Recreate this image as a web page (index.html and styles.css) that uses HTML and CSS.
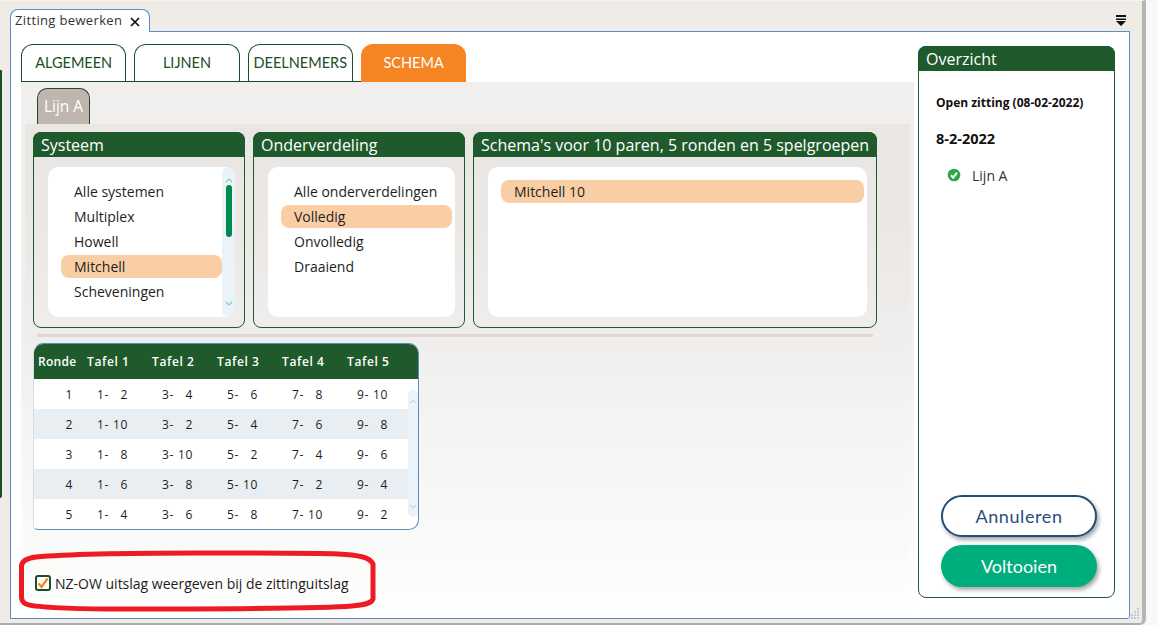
FILE: index.html
```html
<!DOCTYPE html>
<html lang="nl">
<head>
<meta charset="utf-8">
<title>Zitting bewerken</title>
<link rel="stylesheet" href="styles.css">
</head>
<body>
<div class="desk">
  <div class="window">
    <div class="left-sliver"></div>
    <div class="dockbar">
      <div class="docktab">
        <span>Zitting bewerken</span>
        <svg class="close" width="10" height="10" viewBox="0 0 10 10"><path d="M1 1 9 9M9 1 1 9" stroke="#111" stroke-width="1.7" fill="none"/></svg>
      </div>
      <svg class="menu" width="10" height="11" viewBox="0 0 10 11"><path d="M0 0h10v2H0zM0 3.5h10v1.5H0zM0 6h10L5 11z" fill="#111"/></svg>
    </div>
    <div class="panel">
      <div class="main">
        <div class="tabs">
          <div class="tabs-plain">
            <div class="tab">ALGEMEEN</div>
            <div class="tab">LIJNEN</div>
            <div class="tab">DEELNEMERS</div>
          </div>
          <div class="tab tab-active">SCHEMA</div>
        </div>
        <div class="content">
          <div class="subtab">Lijn A</div>
          <div class="inner">
            <div class="groups">
              <section class="group group-s">
                <h2 class="group-head">Systeem</h2>
                <div class="list-wrap">
                  <div class="listbox listbox-scroll">
                    <ul class="list">
                      <li>Alle systemen</li>
                      <li>Multiplex</li>
                      <li>Howell</li>
                      <li class="sel">Mitchell</li>
                      <li>Scheveningen</li>
                    </ul>
                    <div class="vscroll">
                      <svg width="8" height="5" viewBox="0 0 8 5"><path d="M1 4 4 1l3 3" stroke="#7fd0a6" stroke-width="1.2" fill="none"/></svg>
                      <div class="thumb"></div>
                      <svg class="down" width="8" height="5" viewBox="0 0 8 5"><path d="M1 1l3 3 3-3" stroke="#7fd0a6" stroke-width="1.2" fill="none"/></svg>
                    </div>
                  </div>
                </div>
              </section>
              <section class="group group-s">
                <h2 class="group-head">Onderverdeling</h2>
                <div class="list-wrap">
                  <div class="listbox">
                    <ul class="list">
                      <li>Alle onderverdelingen</li>
                      <li class="sel">Volledig</li>
                      <li>Onvolledig</li>
                      <li>Draaiend</li>
                    </ul>
                  </div>
                </div>
              </section>
              <section class="group group-l">
                <h2 class="group-head">Schema's voor 10 paren, 5 ronden en 5 spelgroepen</h2>
                <div class="list-wrap">
                  <div class="listbox">
                    <ul class="list">
                      <li class="sel">Mitchell 10</li>
                    </ul>
                  </div>
                </div>
              </section>
            </div>
            <div class="divider"></div>
            <div class="grid">
              <div class="grid-row grid-head">
                <div>Ronde</div><div>Tafel 1</div><div>Tafel 2</div><div>Tafel 3</div><div>Tafel 4</div><div>Tafel 5</div>
              </div>
              <div class="grid-body">
                <div class="grid-rows">
                  <div class="grid-row">
                    <div class="rn">1</div>
                    <div class="pair"><span>1-</span><span>2</span></div>
                    <div class="pair"><span>3-</span><span>4</span></div>
                    <div class="pair"><span>5-</span><span>6</span></div>
                    <div class="pair"><span>7-</span><span>8</span></div>
                    <div class="pair"><span>9-</span><span>10</span></div>
                  </div>
                  <div class="grid-row alt">
                    <div class="rn">2</div>
                    <div class="pair"><span>1-</span><span>10</span></div>
                    <div class="pair"><span>3-</span><span>2</span></div>
                    <div class="pair"><span>5-</span><span>4</span></div>
                    <div class="pair"><span>7-</span><span>6</span></div>
                    <div class="pair"><span>9-</span><span>8</span></div>
                  </div>
                  <div class="grid-row">
                    <div class="rn">3</div>
                    <div class="pair"><span>1-</span><span>8</span></div>
                    <div class="pair"><span>3-</span><span>10</span></div>
                    <div class="pair"><span>5-</span><span>2</span></div>
                    <div class="pair"><span>7-</span><span>4</span></div>
                    <div class="pair"><span>9-</span><span>6</span></div>
                  </div>
                  <div class="grid-row alt">
                    <div class="rn">4</div>
                    <div class="pair"><span>1-</span><span>6</span></div>
                    <div class="pair"><span>3-</span><span>8</span></div>
                    <div class="pair"><span>5-</span><span>10</span></div>
                    <div class="pair"><span>7-</span><span>2</span></div>
                    <div class="pair"><span>9-</span><span>4</span></div>
                  </div>
                  <div class="grid-row">
                    <div class="rn">5</div>
                    <div class="pair"><span>1-</span><span>4</span></div>
                    <div class="pair"><span>3-</span><span>6</span></div>
                    <div class="pair"><span>5-</span><span>8</span></div>
                    <div class="pair"><span>7-</span><span>10</span></div>
                    <div class="pair"><span>9-</span><span>2</span></div>
                  </div>
                </div>
                <div class="grid-scroll">
                  <div class="grid-bar">
                    <svg width="8" height="5" viewBox="0 0 8 5"><path d="M1 4 4 1l3 3" stroke="#cfd8dc" stroke-width="1.1" fill="none"/></svg>
                    <svg class="down" width="8" height="5" viewBox="0 0 8 5"><path d="M1 1l3 3 3-3" stroke="#cfd8dc" stroke-width="1.1" fill="none"/></svg>
                  </div>
                </div>
              </div>
            </div>
            <label class="check">
              <span class="box">
                <svg width="12" height="12" viewBox="0 0 12 12"><path d="M1.5 6.5 4.5 10 10.5 1.5" stroke="#f58423" stroke-width="2.2" fill="none"/></svg>
              </span>
              <span>NZ-OW uitslag weergeven bij de zittinguitslag</span>
            </label>
          </div>
        </div>
      </div>
      <aside class="side">
        <h2 class="group-head">Overzicht</h2>
        <div class="side-body">
          <div class="side-title">Open zitting (08-02-2022)</div>
          <div class="side-date">8-2-2022</div>
          <div class="side-line">
            <svg width="14" height="14" viewBox="0 0 14 14"><circle cx="7" cy="7" r="6.3" fill="#2fa548"/><path d="M4 7.2 6.2 9.6 10 4.6" stroke="#fff" stroke-width="2" fill="none"/></svg>
            <span>Lijn A</span>
          </div>
          <div class="side-actions">
            <button class="btn btn-cancel" type="button">Annuleren</button>
            <button class="btn btn-done" type="button">Voltooien</button>
          </div>
        </div>
      </aside>
    </div>
    <svg class="grip" width="12" height="12" viewBox="0 0 12 12"><path d="M9 1h2v2H9zM6 4h2v2H6zM9 4h2v2H9zM3 7h2v2H3zM6 7h2v2H6zM9 7h2v2H9zM0 10h2v2H0zM3 10h2v2H3zM6 10h2v2H6zM9 10h2v2H9z" fill="#c4ccd6"/></svg>
    <svg class="marker" width="362" height="68" viewBox="0 0 362 68"><path d="M3.5 20C4 14 10 12 18 11 50 8 120 7 182 7 250 7 300 7 320 8 340 9 352 11 355 18L355 53C353 58 345 59 334 60 300 63 200 63 90 63 50 63 15 61 8 58 4 56 3.5 53 3.5 51Z" fill="none" stroke="#ed1c24" stroke-width="5"/></svg>
  </div>
</div>
</body>
</html>
```

FILE: styles.css
```css
* { box-sizing: border-box; }
html, body { margin: 0; padding: 0; background: #fff; }
body { font-family: "Open Sans", "Noto Sans", sans-serif; color: #1c1c1c; width: 1160px; height: 634px; overflow: hidden; }
ul { list-style: none; margin: 0; padding: 0; }
h2 { margin: 0; font-weight: 400; }

.desk { width: 1157px; height: 625px; background: #f8f8f8; }
.window {
  position: relative;
  width: 1146px; height: 625px;
  background: #efebe7;
  border-right: 4px solid #b5b5b5;
  border-bottom: 2px solid #adadad;
  border-top: 1px solid #f4f3f1;
  border-bottom-right-radius: 6px;
}
.left-sliver {
  position: absolute; left: 0; top: 69px;
  width: 2px; height: 428px;
  background: #1b4d26;
  border-radius: 0 2px 3px 0;
}
.dockbar { height: 30px; padding: 8px 16px 0 10px; display: flex; justify-content: space-between; align-items: flex-start; }
.docktab {
  position: relative; z-index: 1;
  width: 140px; height: 23px;
  background: #fff;
  border: 1px solid #5b8cc4;
  border-bottom: none;
  border-radius: 8px 8px 0 0;
  display: flex; align-items: center;
  padding: 0 0 3px 4px;
  font-size: 13px; color: #333; letter-spacing: .35px;
}
.close { margin-left: 8px; margin-top: 4px; }
.menu { margin-top: 6px; }

.panel {
  width: 1120px; height: 588px; margin-left: 10px;
  background: #fff;
  border: 1px solid #5b8cc4;
  padding: 12px 14px 0 10px;
  display: flex; gap: 4px; align-items: flex-start;
}
.main { width: 893px; }

.tabs { display: flex; height: 38px; }
.tabs-plain { display: flex; gap: 8px; padding-right: 8px; border-bottom: 1px solid #1b4d26; height: 38px; }
.tab {
  width: 105.33px; height: 37px;
  border: 1px solid #1b4d26; border-bottom: none;
  border-radius: 12px 12px 0 0;
  font-family: "Lato", sans-serif; font-size: 14.5px; color: #1b4d26;
  display: flex; align-items: center; justify-content: center;
  padding-bottom: 1px;
}
.tab-active { height: 38px; background: #f58423; border: none; color: #fff; }

.content {
  height: 530px;
  padding-top: 6px;
  background: linear-gradient(#f1efed 0, #f1efed 240px, #f6f5f4 340px, #fdfdfd 480px, #fff 530px);
}
.subtab {
  width: 53px; height: 37px; margin-left: 16px;
  background: #bfb5ae;
  border: 1px solid #1b4d26; border-bottom: none;
  border-radius: 10px 10px 0 0;
  color: #fff; font-size: 15.5px;
  display: flex; align-items: center; justify-content: center;
  padding-bottom: 2px;
}
.inner {
  margin: -1px 4px 0;
  padding: 8px;
  height: 488px;
  background: linear-gradient(#e9e6e4 0, #eae7e5 90px, #f0eeec 210px, #f5f4f3 300px, #fbfbfa 440px, #fff 488px);
}
.groups { display: flex; gap: 8px; }
.group { height: 196px; border: 1px solid #1f5a2c; border-radius: 8px; display: flex; flex-direction: column; }
.group-s { width: 212px; }
.group-l { width: 404px; }
.group-head {
  margin: -1px -1px 0;
  height: 25px;
  background: #1f5a2c;
  color: #fff;
  font-size: 16px; line-height: 27px;
  padding-left: 8px;
  border-radius: 8px 8px 0 0;
  white-space: nowrap;
  overflow: hidden;
}
.list-wrap { padding: 10px 9px 10px 14px; flex: 1; display: flex; }
.listbox { flex: 1; background: #fff; border-radius: 10px; display: flex; overflow: hidden; }
.list { flex: 1; padding: 13px 3px 0 13px; }
.listbox-scroll .list { padding-right: 0; }
.list li {
  height: 23px; margin-bottom: 2px;
  padding-left: 13px;
  border-radius: 8px;
  font-size: 14px; line-height: 23px;
  color: #1e1e1e;
}
.list li.sel { background: #facea5; }
.vscroll {
  width: 13px; background: #ebf3fa;
  border-radius: 6px;
  display: flex; flex-direction: column; align-items: center;
  padding-top: 11px;
}
.vscroll .down { margin-top: auto; margin-bottom: 11px; }
.thumb { width: 6px; height: 52px; margin-top: 2px; background: #008a50; border-radius: 3px; }

.divider { height: 3px; width: 836px; margin: 6px 0 6px 4px; background: #dfd8d4; }

.grid {
  width: 386px; height: 187px;
  background: #fff;
  border: 1px solid #5b8cc4;
  border-left-color: #d3deea;
  border-radius: 10px 10px 10px 5px;
  overflow: hidden;
  font-size: 12px;
}
.grid-row {
  display: grid;
  grid-template-columns: 53px repeat(4, 65px) 61px;
  height: 30px;
  align-items: center;
  letter-spacing: .7px;
}
.grid-head {
  width: 385px; height: 35px;
  margin-left: -1px;
  background: #1f5a2c; color: #fff;
  font-weight: 600;
  grid-template-columns: 54px repeat(4, 65px) 71px;
  padding-bottom: 1px;
  letter-spacing: .6px;
}
.grid-head div:first-child { padding-left: 5px; letter-spacing: .3px; }
.grid-body { display: flex; }
.grid-rows { width: 374px; }
.alt { background: #e9eef2; }
.rn { text-align: right; padding-right: 14px; }
.pair { display: flex; justify-content: space-between; width: 41px; padding-left: 10px; }
.grid-scroll { width: 10px; padding-top: 11px; }
.grid-bar {
  height: 127px;
  background: #ebf3fa; border-radius: 5px;
  display: flex; flex-direction: column; align-items: center; justify-content: space-between;
  padding: 9px 0 8px;
}

.check { display: flex; align-items: center; gap: 4px; margin: 44px 0 0 2px; height: 18px; font-size: 14px; color: #1c1c1c; }
.box {
  width: 16px; height: 16px;
  border: 2px solid #1b4d26; border-radius: 3px;
  background: #fff;
  display: flex; align-items: center; justify-content: center;
}

.side {
  width: 197px; height: 552px; margin-top: 2px;
  border: 1px solid #1f5a2c; border-radius: 8px;
  display: flex; flex-direction: column;
}
.side-body { flex: 1; padding: 24px 17px 10px 17px; display: flex; flex-direction: column; }
.side-title { font-size: 12px; font-weight: 700; line-height: 16px; color: #111; white-space: nowrap; }
.side-date { font-size: 14.5px; font-weight: 700; line-height: 20px; margin-top: 18px; color: #111; }
.side-line { display: flex; align-items: center; gap: 11px; margin: 16px 0 0 11px; height: 20px; font-size: 14px; color: #333; }
.side-actions { margin-top: auto; display: flex; flex-direction: column; gap: 8px; padding: 0 0 0 5px; }
.btn {
  width: 156px; height: 42px;
  border-radius: 21px;
  font-family: "Lato", sans-serif; font-size: 18px;
  box-shadow: 2px 3px 4px rgba(0,0,0,.35);
  cursor: pointer;
  padding: 0 0 1px;
}
.btn-cancel { background: #fff; border: 2px solid #1f4e79; color: #2a4d7a; letter-spacing: .6px; }
.btn-done { background: #00ad7c; border: none; color: #fff; }

.grip { position: absolute; left: 1128px; top: 606px; }
.marker { position: absolute; left: 18px; top: 545px; pointer-events: none; }
```
